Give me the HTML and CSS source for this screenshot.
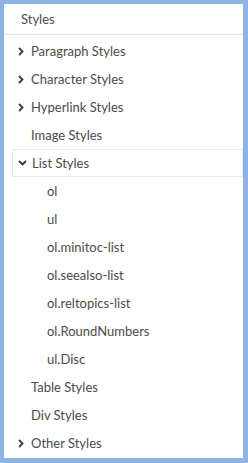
FILE: index.html
```html
<!DOCTYPE html>
<html lang="en">
<head>
  <meta charset="UTF-8">
  <title>Styles</title>
  <link rel="stylesheet" href="styles.css">
</head>
<body>
  <div class="panel">
    <div class="panel-header">Styles</div>

    <div class="tree">
      <div class="row"><span class="chev"><svg width="8" height="9" viewBox="0 0 8 9"><path d="M2 1 L5.5 4.5 L2 8" fill="none" stroke="#3a3a3a" stroke-width="1.8"/></svg></span>Paragraph Styles</div>
      <div class="row"><span class="chev"><svg width="8" height="9" viewBox="0 0 8 9"><path d="M2 1 L5.5 4.5 L2 8" fill="none" stroke="#3a3a3a" stroke-width="1.8"/></svg></span>Character Styles</div>
      <div class="row"><span class="chev"><svg width="8" height="9" viewBox="0 0 8 9"><path d="M2 1 L5.5 4.5 L2 8" fill="none" stroke="#3a3a3a" stroke-width="1.8"/></svg></span>Hyperlink Styles</div>
      <div class="row"><span class="chev"></span>Image Styles</div>
      <div class="row selected"><span class="chev"><svg width="9" height="8" viewBox="0 0 9 8"><path d="M1 2 L4.5 5.5 L8 2" fill="none" stroke="#3a3a3a" stroke-width="1.8"/></svg></span>List Styles</div>
      <div class="row child">ol</div>
      <div class="row child">ul</div>
      <div class="row child">ol.minitoc-list</div>
      <div class="row child">ol.seealso-list</div>
      <div class="row child">ol.reltopics-list</div>
      <div class="row child">ol.RoundNumbers</div>
      <div class="row child">ul.Disc</div>
      <div class="row"><span class="chev"></span>Table Styles</div>
      <div class="row"><span class="chev"></span>Div Styles</div>
      <div class="row"><span class="chev"><svg width="8" height="9" viewBox="0 0 8 9"><path d="M2 1 L5.5 4.5 L2 8" fill="none" stroke="#3a3a3a" stroke-width="1.8"/></svg></span>Other Styles</div>
    </div>
  </div>
</body>
</html>
```

FILE: styles.css
```css
html, body {
  margin: 0;
  padding: 0;
}

body {
  font-family: Lato, "Open Sans", sans-serif;
  font-size: 13px;
  color: #4b4b4b;
  width: 248px;
  height: 463px;
  box-sizing: border-box;
  background: #ffffff;
  border-style: solid;
  border-color: #8db4e2;
  border-width: 4px 5px 5px 4px;
  overflow: hidden;
}

.panel-header {
  height: 30px;
  line-height: 30px;
  padding-left: 17px;
  border-bottom: 1px solid #e4e4e4;
  margin-bottom: 2px;
}

.tree {
  display: flex;
  flex-direction: column;
}

.row {
  height: 28px;
  display: flex;
  align-items: center;
  padding-left: 13px;
  box-sizing: border-box;
  margin-right: 0;
}

.chev {
  width: 14px;
  display: flex;
  align-items: center;
}

.row.selected {
  margin-left: 8px;
  margin-right: 0;
  padding-left: 5px;
  border: 1px solid #e1ebf7;
}

.row.child {
  padding-left: 43px;
}
```
